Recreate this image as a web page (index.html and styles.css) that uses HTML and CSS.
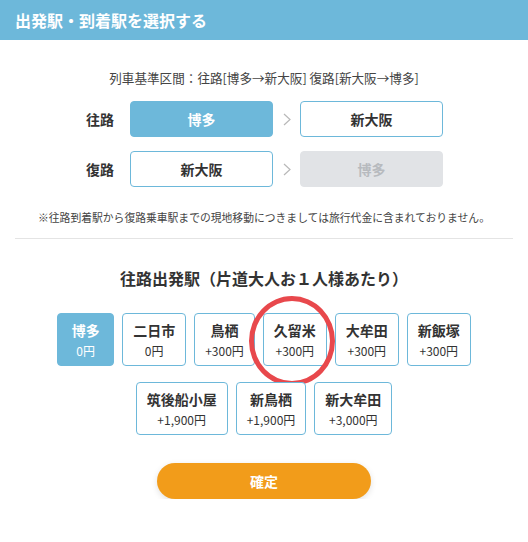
FILE: index.html
```html
<!DOCTYPE html>
<html lang="ja">
<head>
  <meta charset="UTF-8">
  <title>出発駅・到着駅を選択する</title>
  <link rel="stylesheet" href="styles.css">
</head>
<body>
  <h1 class="title">出発駅・到着駅を選択する</h1>

  <div class="panel">
    <p class="route-base">列車基準区間：往路[博多→新大阪] 復路[新大阪→博多]</p>

    <div class="routes">
      <div class="route-row">
        <span class="route-label">往路</span>
        <div class="route-box active">博多</div>
        <span class="route-arrow">
          <svg width="8" height="13" viewBox="0 0 8 13"><polyline points="1,1 7,6.5 1,12" fill="none" stroke="#b8b8b8" stroke-width="1.2"/></svg>
        </span>
        <div class="route-box">新大阪</div>
      </div>
      <div class="route-row">
        <span class="route-label">復路</span>
        <div class="route-box">新大阪</div>
        <span class="route-arrow">
          <svg width="8" height="13" viewBox="0 0 8 13"><polyline points="1,1 7,6.5 1,12" fill="none" stroke="#b8b8b8" stroke-width="1.2"/></svg>
        </span>
        <div class="route-box disabled">博多</div>
      </div>
    </div>

    <p class="note">※往路到着駅から復路乗車駅までの現地移動につきましては旅行代金に含まれておりません。</p>

    <hr class="divider">

    <h2 class="section-title">往路出発駅（片道大人お１人様あたり）</h2>

    <div class="stations">
      <div class="station active"><span class="st-name">博多</span><span class="st-price">0円</span></div>
      <div class="station"><span class="st-name">二日市</span><span class="st-price">0円</span></div>
      <div class="station"><span class="st-name">鳥栖</span><span class="st-price">+300円</span></div>
      <div class="station marked"><span class="st-name">久留米</span><span class="st-price">+300円</span><span class="mark"></span></div>
      <div class="station"><span class="st-name">大牟田</span><span class="st-price">+300円</span></div>
      <div class="station"><span class="st-name">新飯塚</span><span class="st-price">+300円</span></div>
      <div class="station"><span class="st-name">筑後船小屋</span><span class="st-price">+1,900円</span></div>
      <div class="station"><span class="st-name">新鳥栖</span><span class="st-price">+1,900円</span></div>
      <div class="station"><span class="st-name">新大牟田</span><span class="st-price">+3,000円</span></div>
    </div>

    <div class="actions">
      <button class="confirm-btn">確定</button>
    </div>
  </div>
</body>
</html>
```

FILE: styles.css
```css
body {
  margin: 0;
  font-family: "Noto Sans CJK JP", "Noto Sans", sans-serif;
  color: #333;
  background: #fff;
}

.title {
  margin: 0;
  height: 40px;
  line-height: 40px;
  padding-left: 15px;
  background: #6db8da;
  color: #fff;
  font-size: 16px;
  font-weight: bold;
}

.panel {
  padding: 0 15px;
}

.route-base {
  margin: 29px 0 0;
  text-align: center;
  font-size: 12.6px;
  line-height: 18px;
  color: #444;
}

.routes {
  margin-top: 14px;
  display: flex;
  flex-direction: column;
  gap: 14px;
}

.route-row {
  display: flex;
  justify-content: center;
  align-items: center;
  height: 36px;
  padding-left: 1px;
}

.route-label {
  width: 29px;
  margin-right: 15px;
  font-size: 14px;
  font-weight: bold;
  white-space: nowrap;
}

.route-box {
  width: 143px;
  height: 36px;
  box-sizing: border-box;
  border: 1px solid #6db8da;
  border-radius: 4px;
  display: flex;
  align-items: center;
  justify-content: center;
  font-size: 14px;
  font-weight: bold;
  background: #fff;
}

.route-box.active {
  background: #6db8da;
  color: #fff;
}

.route-box.disabled {
  background: #e1e3e6;
  border-color: #e1e3e6;
  color: #b7babe;
}

.route-arrow {
  width: 27px;
  display: flex;
  justify-content: center;
}

.note {
  margin: 22px 0 0;
  text-align: center;
  font-size: 10.8px;
  line-height: 16px;
  color: #444;
}

.divider {
  margin: 13px 0 0;
  border: 0;
  border-top: 1px solid #e4e4e4;
}

.section-title {
  margin: 27px 0 0;
  text-align: center;
  font-size: 16px;
  line-height: 24px;
  font-weight: bold;
}

.stations {
  width: 420px;
  margin: 23px auto 0;
  display: flex;
  flex-wrap: wrap;
  justify-content: center;
  gap: 16px 8px;
}

.station {
  position: relative;
  height: 53px;
  min-width: 57px;
  box-sizing: border-box;
  padding: 0 10px;
  border: 1px solid #6db8da;
  border-radius: 4px;
  display: flex;
  flex-direction: column;
  align-items: center;
  justify-content: center;
  background: #fff;
}

.station.active {
  background: #6db8da;
  border-color: #6db8da;
  color: #fff;
}

.st-name {
  font-size: 14px;
  font-weight: bold;
  line-height: 20px;
}

.st-price {
  font-size: 12px;
  line-height: 18px;
  margin-top: 2px;
}

/* hand-drawn red ring around the station */
.mark {
  position: absolute;
  left: -15px;
  top: -18px;
  width: 86px;
  height: 90px;
  box-sizing: border-box;
  border: 5px solid #e8484c;
  border-radius: 50%;
  pointer-events: none;
}

.actions {
  margin-top: 28px;
  display: flex;
  justify-content: center;
}

.confirm-btn {
  width: 214px;
  height: 36px;
  border: none;
  border-radius: 18px;
  background: #f29c1a;
  color: #fff;
  font-family: inherit;
  font-size: 14px;
  font-weight: bold;
  box-shadow: 0 2px 6px rgba(0, 0, 0, 0.12);
  cursor: pointer;
}
```
